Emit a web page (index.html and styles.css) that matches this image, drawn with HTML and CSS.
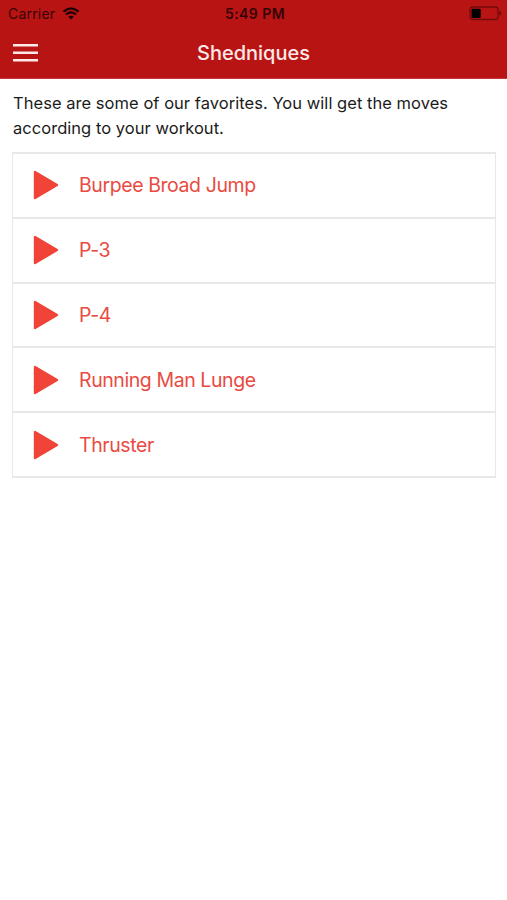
FILE: index.html
```html
<!DOCTYPE html>
<html lang="en">
<head>
<meta charset="utf-8">
<title>Shedniques</title>
<link rel="stylesheet" href="styles.css">
</head>
<body>
<header class="header">
  <div class="status">
    <div class="carrier"><span>Carrier</span>
      <svg class="wifi" viewBox="0 0 18 13" width="18" height="13"><path d="M1.5 4.7Q9-2 16.5 4.7M4.1 7.5Q9 3.2 13.9 7.5" fill="none" stroke="currentColor" stroke-width="2.3"/><path d="M6.2 9.7Q9 7.6 11.8 9.7L9 12.5Z" fill="currentColor"/></svg>
    </div>
    <span class="time">5:49 PM</span>
    <svg class="battery" viewBox="0 0 33 15" width="33" height="15"><rect x="1" y="1" width="28" height="12.5" rx="2.5" fill="none" stroke="#74090a" stroke-width="1.3"/><rect x="2.5" y="2.7" width="9.2" height="9.2" rx="1" fill="#000"/><path d="M30.3 5Q32.3 5.5 32.3 7.2T30.3 9.5Z" fill="#74090a"/></svg>
  </div>
  <nav class="nav">
    <svg class="menu" viewBox="0 0 25 20" width="25" height="20"><path d="M0 2.2H25M0 9.7H25M0 17.2H25" stroke="#fce9e8" stroke-width="2.6"/></svg>
    <h1 class="title">Shedniques</h1>
  </nav>
</header>
<main class="content">
  <p class="intro">These are some of our favorites. You will get the moves<br>according to your workout.</p>
  <ul class="moves">
    <li class="move"><svg class="play" viewBox="0 0 26 30" width="26" height="30"><path d="M2 2V28L24 15Z"/></svg><span>Burpee Broad Jump</span></li>
    <li class="move"><svg class="play" viewBox="0 0 26 30" width="26" height="30"><path d="M2 2V28L24 15Z"/></svg><span>P-3</span></li>
    <li class="move"><svg class="play" viewBox="0 0 26 30" width="26" height="30"><path d="M2 2V28L24 15Z"/></svg><span>P-4</span></li>
    <li class="move"><svg class="play" viewBox="0 0 26 30" width="26" height="30"><path d="M2 2V28L24 15Z"/></svg><span>Running Man Lunge</span></li>
    <li class="move"><svg class="play" viewBox="0 0 26 30" width="26" height="30"><path d="M2 2V28L24 15Z"/></svg><span>Thruster</span></li>
  </ul>
</main>
</body>
</html>
```
FILE: styles.css
```css
* { box-sizing: border-box; }
body { margin: 0; background: #fff; color: #1b1b1b; font-family: Inter, "Liberation Sans", sans-serif; }
svg { display: block; flex: none; }
.header { height: 79px; background: #b91414; border-bottom: 1px solid #c13a39; }
.status { display: grid; grid-template-columns: 1fr auto 1fr; align-items: center; height: 27px; padding: 0 5px 0 8px; color: #350406; font-size: 14px; line-height: 27px; }
.carrier { display: flex; align-items: center; gap: 7px; letter-spacing: .2px; }
.wifi { color: #1d0203; }
.time { font-weight: 600; letter-spacing: .45px; }
.battery { justify-self: end; }
.nav { display: grid; grid-template-columns: 1fr auto 1fr; align-items: center; height: 51px; padding: 0 13px; }
.title { margin: 0; color: #fce9e8; font-size: 20px; line-height: 24px; font-weight: 500; }
.content { padding: 12px 11px 0 12px; }
.intro { margin: 0 1px 12px; font-size: 16.5px; letter-spacing: .04px; line-height: 24.5px; }
.moves { margin: 0; padding: 0; list-style: none; border: solid #e8e8e8; border-width: 0 1.5px 2px; }
.move { display: flex; align-items: center; gap: 20px; height: 64.8px; padding-left: 20px; border-top: 2px solid #e8e8e8; color: #e94b42; font-size: 19.5px; letter-spacing: -.42px; }
.play { fill: #f04439; stroke: #f04439; stroke-width: 2.4; stroke-linejoin: round; }
```
